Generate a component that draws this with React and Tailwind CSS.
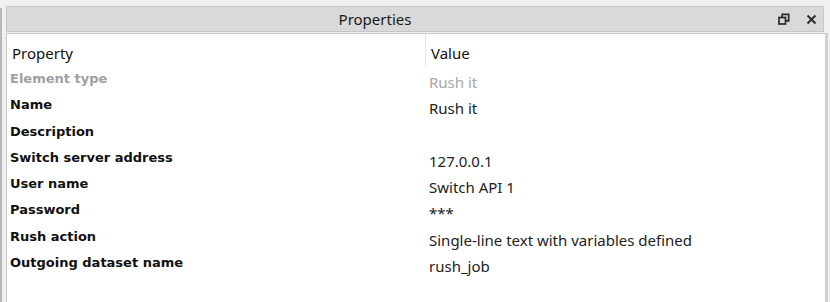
import React from "react";

const rows = [
  ["Element type", "Rush it", true],
  ["Name", "Rush it"],
  ["Description", ""],
  ["Switch server address", "127.0.0.1"],
  ["User name", "Switch API 1"],
  ["Password", "***"],
  ["Rush action", "Single-line text with variables defined"],
  ["Outgoing dataset name", "rush_job"],
];

export default function App() {
  return (
    <div className="w-[830px] h-[302px] bg-[#f0f0f0] flex overflow-hidden" style={{ fontFamily: '"Noto Sans", sans-serif' }}>
      <div className="w-[3px] mt-[8px] border-l-2 border-[#b8b8b8] shrink-0" />
      <div className="flex flex-col flex-1 pl-[3px] pt-[6px] pr-[2px]">
        <div className="h-[26px] mr-[4px] bg-[#d9d9d9] border border-[#c6c6c6] flex items-center relative">
          <div className="w-[736px] text-center text-[15px] text-[#1a1a1a] leading-none">Properties</div>
          <div className="absolute right-[33px] top-[6px]">
            <svg width="12" height="12" viewBox="0 0 12 12">
              <rect x="1" y="4.5" width="6.5" height="6.5" fill="none" stroke="#2a2a2a" strokeWidth="1.7" />
              <path d="M4.2 4V1.3H10.7V7.8H8" fill="none" stroke="#2a2a2a" strokeWidth="1.7" />
            </svg>
          </div>
          <div className="absolute right-[6px] top-[7px]">
            <svg width="11" height="11" viewBox="0 0 11 11">
              <path d="M1.5 1.5L9.5 9.5M9.5 1.5L1.5 9.5" stroke="#2a2a2a" strokeWidth="1.9" />
            </svg>
          </div>
        </div>
        <div className="flex-1 mt-[1px] bg-white border border-[#c8c8c8] border-r-[3px] border-r-[#d0d0d0] border-b-0">
          <div className="flex h-[34px]">
            <div className="w-[418px] pl-[5px] pt-[8px] text-[15px] text-[#111]">Property</div>
            <div className="h-[32px] border-l border-[#e5e5e5] pl-[5px] pt-[8px] text-[15px] text-[#111]">Value</div>
          </div>
          {rows.map(([k, v, dis], i) => (
            <div key={i} className="flex h-[26.3px]">
              <div
                className={"w-[418px] pl-[3px] text-[13px] font-bold pt-[1px] " + (dis ? "text-[#a0a0a0]" : "text-[#111]")}
                style={{ fontFamily: '"DejaVu Sans", sans-serif' }}
              >
                {k}
              </div>
              <div className={"pl-[4px] pt-[3px] text-[15px] " + (dis ? "text-[#a8a8a8]" : "text-[#222]")}>{v}</div>
            </div>
          ))}
        </div>
      </div>
    </div>
  );
}
